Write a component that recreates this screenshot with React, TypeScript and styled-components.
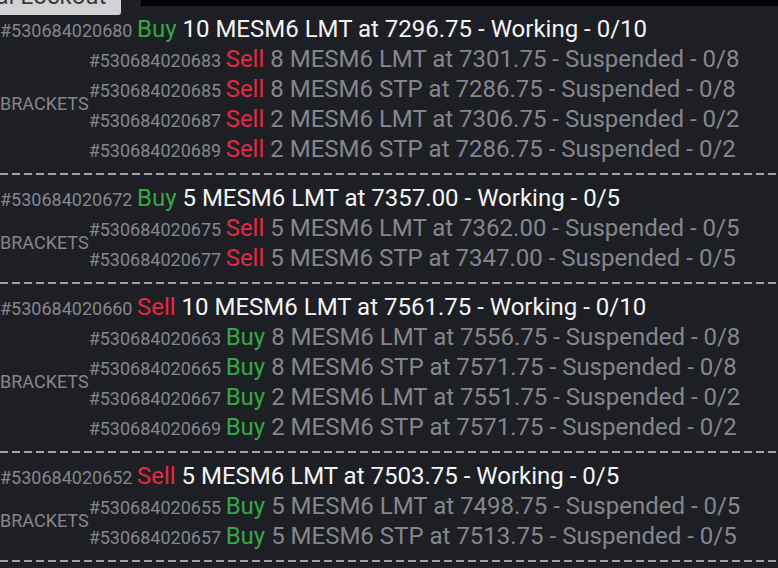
import React from "react";
import styled, { createGlobalStyle } from "styled-components";

const GlobalStyle = createGlobalStyle`
  html, body {
    margin: 0;
    padding: 0;
    background: #1e1f24;
    overflow: hidden;
  }
  body {
    font-family: Roboto, "Noto Sans", Arial, sans-serif;
  }
`;

const Page = styled.div`
  width: 778px;
  height: 568px;
  overflow: hidden;
  background: #1e1f24;
  display: flex;
  flex-direction: column;
`;

const TopBar = styled.div`
  height: 14px;
  display: flex;
  align-items: flex-start;
  gap: 20px;
  flex-shrink: 0;
`;

const LockButton = styled.button`
  font-family: Roboto, Arial, sans-serif;
  font-size: 24px;
  line-height: 30px;
  color: #3a3b40;
  background: #d2d2d4;
  border: none;
  border-radius: 0 0 3px 0;
  padding: 0 15px 4px 14px;
  margin: -19px 0 0 -79px;
  white-space: nowrap;
  position: relative;
  z-index: 1;
`;

const BlackBar = styled.div`
  flex: 1;
  height: 6px;
  background: #000;
`;

const List = styled.div`
  display: flex;
  flex-direction: column;
`;

const Group = styled.div`
  display: flex;
  flex-direction: column;
`;

const Line = styled.div<{ $sub?: boolean }>`
  font-size: 24px;
  line-height: 30px;
  height: 30px;
  white-space: nowrap;
  color: ${(p) => (p.$sub ? "#85868d" : "#f4f4f5")};
`;

const OrderId = styled.span`
  font-size: 18px;
  color: #85868d;
`;

const Side = styled.span<{ $side: "Buy" | "Sell" }>`
  color: ${(p) => (p.$side === "Buy" ? "#33a845" : "#e22a45")};
`;

const Brackets = styled.div`
  display: flex;
  align-items: center;
`;

const BracketLabel = styled.div`
  font-size: 18px;
  line-height: 22px;
  color: #85868d;
  text-transform: uppercase;
  flex-shrink: 0;
`;

const SubRows = styled.div`
  display: flex;
  flex-direction: column;
`;

const Divider = styled.div`
  height: 2px;
  margin: 9px 0 8px;
  background: repeating-linear-gradient(
    to right,
    #a2a2a6 0 8px,
    transparent 8px 12px
  );
  flex-shrink: 0;
`;

type Order = { id: string; side: "Buy" | "Sell"; text: string };
type OrderGroup = { main: Order; subs: Order[] };

const groups: OrderGroup[] = [
  {
    main: { id: "530684020680", side: "Buy", text: "10 MESM6 LMT at 7296.75 - Working - 0/10" },
    subs: [
      { id: "530684020683", side: "Sell", text: "8 MESM6 LMT at 7301.75 - Suspended - 0/8" },
      { id: "530684020685", side: "Sell", text: "8 MESM6 STP at 7286.75 - Suspended - 0/8" },
      { id: "530684020687", side: "Sell", text: "2 MESM6 LMT at 7306.75 - Suspended - 0/2" },
      { id: "530684020689", side: "Sell", text: "2 MESM6 STP at 7286.75 - Suspended - 0/2" },
    ],
  },
  {
    main: { id: "530684020672", side: "Buy", text: "5 MESM6 LMT at 7357.00 - Working - 0/5" },
    subs: [
      { id: "530684020675", side: "Sell", text: "5 MESM6 LMT at 7362.00 - Suspended - 0/5" },
      { id: "530684020677", side: "Sell", text: "5 MESM6 STP at 7347.00 - Suspended - 0/5" },
    ],
  },
  {
    main: { id: "530684020660", side: "Sell", text: "10 MESM6 LMT at 7561.75 - Working - 0/10" },
    subs: [
      { id: "530684020663", side: "Buy", text: "8 MESM6 LMT at 7556.75 - Suspended - 0/8" },
      { id: "530684020665", side: "Buy", text: "8 MESM6 STP at 7571.75 - Suspended - 0/8" },
      { id: "530684020667", side: "Buy", text: "2 MESM6 LMT at 7551.75 - Suspended - 0/2" },
      { id: "530684020669", side: "Buy", text: "2 MESM6 STP at 7571.75 - Suspended - 0/2" },
    ],
  },
  {
    main: { id: "530684020652", side: "Sell", text: "5 MESM6 LMT at 7503.75 - Working - 0/5" },
    subs: [
      { id: "530684020655", side: "Buy", text: "5 MESM6 LMT at 7498.75 - Suspended - 0/5" },
      { id: "530684020657", side: "Buy", text: "5 MESM6 STP at 7513.75 - Suspended - 0/5" },
    ],
  },
];

const OrderLine: React.FC<{ order: Order; sub?: boolean }> = ({ order, sub }) => (
  <Line $sub={sub}>
    <OrderId>#{order.id} </OrderId>
    <Side $side={order.side}>{order.side}</Side> {order.text}
  </Line>
);

export default function App() {
  return (
    <Page>
      <GlobalStyle />
      <TopBar>
        <LockButton>Manual Lockout</LockButton>
        <BlackBar />
      </TopBar>
      <List>
        {groups.map((g) => (
          <Group key={g.main.id}>
            <OrderLine order={g.main} />
            <Brackets>
              <BracketLabel>Brackets</BracketLabel>
              <SubRows>
                {g.subs.map((s) => (
                  <OrderLine key={s.id} order={s} sub />
                ))}
              </SubRows>
            </Brackets>
            <Divider />
          </Group>
        ))}
      </List>
    </Page>
  );
}
